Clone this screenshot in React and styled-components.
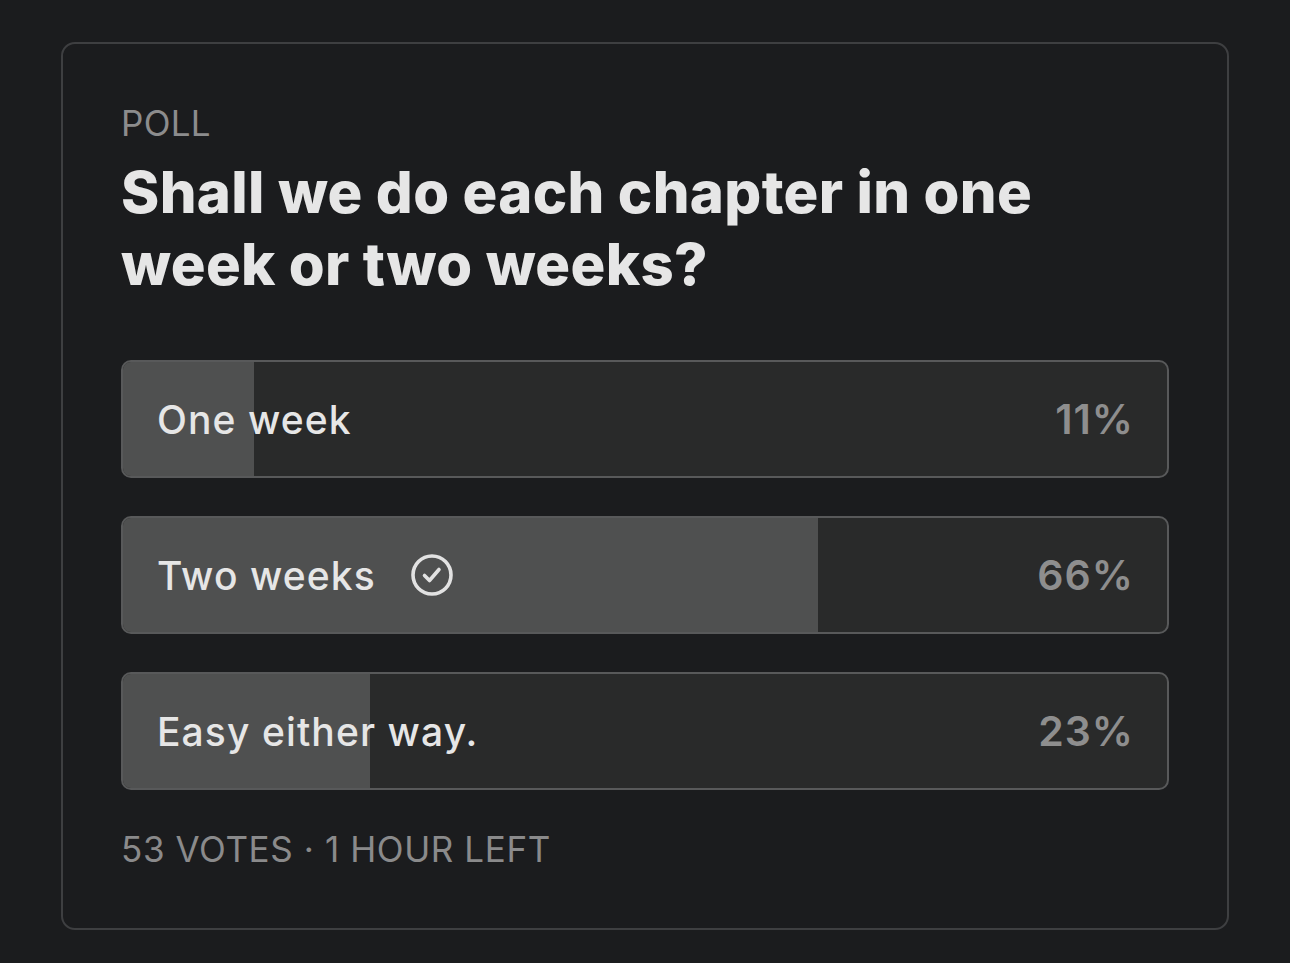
import styled, { createGlobalStyle } from "styled-components";

const GlobalStyle = createGlobalStyle`
  html, body {
    margin: 0;
    background: #1b1c1e;
  }
  body {
    padding: 42px 61px 34px;
    font-family: Inter, "Noto Sans", "Liberation Sans", sans-serif;
    -webkit-font-smoothing: antialiased;
  }
`;

const options = [
   { label: "One week", pct: 11, fill: 12.5 },
   { label: "Two weeks", pct: 66, fill: 66.6, chosen: true },
   { label: "Easy either way.", pct: 23, fill: 23.7 },
];

const CheckIcon = () => (
   <svg width="44" height="44" viewBox="0 0 44 44" fill="none">
      <circle cx="22" cy="22" r="19" stroke="#e2e2e2" strokeWidth="3.6" />
      <path d="M14.5 22.5 L19.5 27.5 L29 16.5" stroke="#e2e2e2" strokeWidth="3.6"
         strokeLinecap="round" strokeLinejoin="round" />
   </svg>
);

const Poll = () => {
   return (
      <Card>
         <Kicker>POLL</Kicker>
         <Question>Shall we do each chapter in one week or two weeks?</Question>
         <Options>
            {options.map((o) => (
               <Option key={o.label}>
                  <Fill style={{ width: `${o.fill}%` }} />
                  <Label>
                     {o.label}
                     {o.chosen && <CheckIcon />}
                  </Label>
                  <Percent>{o.pct}%</Percent>
               </Option>
            ))}
         </Options>
         <Meta>53 VOTES · 1 HOUR LEFT</Meta>
      </Card>
   );
};

const Card = styled.section`
  border: 2px solid #3e3f41;
  border-radius: 14px;
  background: #1b1c1e;
  padding: 58px 58px 58px;
  min-height: 887px;
  box-sizing: border-box;
  display: flex;
  flex-direction: column;
`;

const Kicker = styled.div`
  font-size: 35px;
  line-height: 42px;
  color: #8c8c8d;
  letter-spacing: 0.3px;
`;

const Question = styled.h1`
  margin: 12px 0 0;
  max-width: 960px;
  font-size: 58px;
  line-height: 72px;
  font-weight: 800;
  color: #e6e6e6;
  letter-spacing: 0.35px;
`;

const Options = styled.div`
  display: flex;
  flex-direction: column;
  gap: 38px;
  margin-top: 60px;
`;

const Option = styled.div`
  position: relative;
  height: 118px;
  box-sizing: border-box;
  border: 2px solid #58595a;
  border-radius: 10px;
  background: #292a2a;
  overflow: hidden;
  display: flex;
  align-items: center;
  justify-content: space-between;
  padding: 0 33px 0 34px;
`;

const Fill = styled.div`
  position: absolute;
  left: 0;
  top: 0;
  bottom: 0;
  background: #4f5050;
`;

const Label = styled.span`
  position: relative;
  display: flex;
  align-items: center;
  gap: 34px;
  font-size: 39px;
  font-weight: 500;
  color: #e6e6e6;
  letter-spacing: 1.1px;
`;

const Percent = styled.span`
  position: relative;
  font-size: 41px;
  font-weight: 600;
  color: #8e8e8e;
  letter-spacing: 1px;
`;

const Meta = styled.div`
  margin-top: 38px;
  font-size: 35px;
  line-height: 42px;
  color: #8a8a8b;
  letter-spacing: 0.6px;
`;

export default function App() {
   return (
      <>
         <GlobalStyle />
         <Poll />
      </>
   );
}
